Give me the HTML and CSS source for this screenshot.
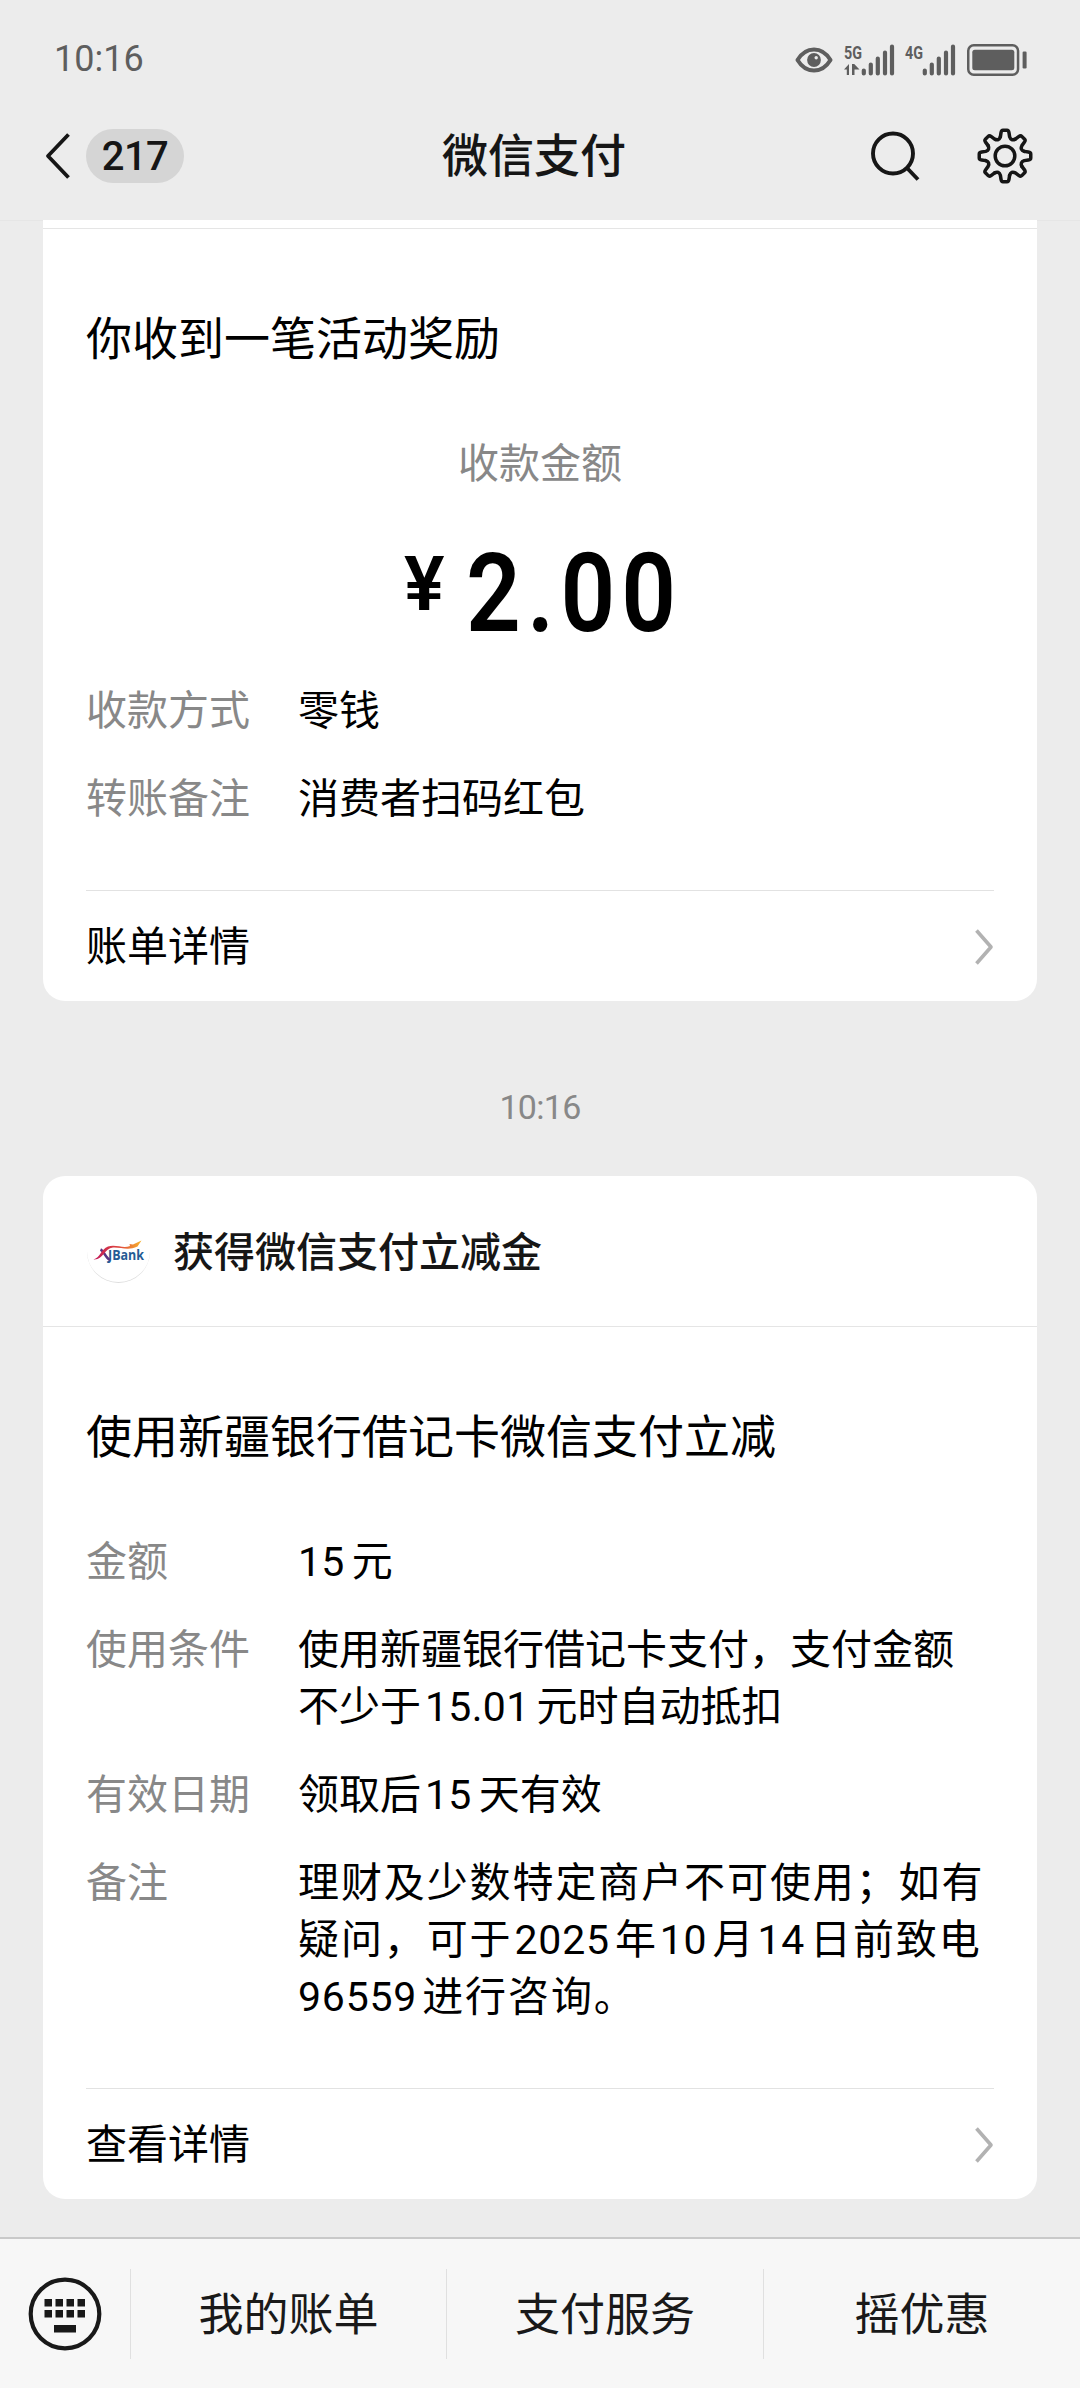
FILE: index.html
```html
<!DOCTYPE html>
<html lang="zh-CN">
<head>
<meta charset="utf-8">
<title>微信支付</title>
<link rel="stylesheet" href="styles.css">
</head>
<body>
<div class="screen">
  <header class="top">
    <div class="status">
      <span class="clock">10:16</span>
      <div class="status-icons">
        <svg class="eye" width="38" height="26" viewBox="0 0 38 26"><path d="M2.500 13C7 5.500 13 2.500 19 2.500S31 5.500 35.500 13C31 20.500 25 23.500 19 23.500S7 20.500 2.500 13Z" fill="none" stroke="#5e5e5e" stroke-width="4" stroke-linejoin="round"/><circle cx="19" cy="13" r="6.900" fill="#5e5e5e"/><circle cx="21.200" cy="10.800" r="1.700" fill="#ececec"/></svg>
        <svg class="signal" width="51" height="32" viewBox="0 0 51 32"><text class="net" x="0" y="14.500" textLength="18" lengthAdjust="spacingAndGlyphs">5G</text><path d="M0 25.500L5 20V31H2.800V25.500ZM8 20H10.200L15.500 25.500H10.500V31H8Z" fill="#5e5e5e"/><path d="M19.800 26.500V29.500M26.800 20.500V29.500M33.800 14.500V29.500M41 8.500V29.500M48 2.500V29.500" stroke="#5e5e5e" stroke-width="4.200" stroke-linecap="round"/></svg>
        <svg class="signal" width="51" height="32" viewBox="0 0 51 32"><text class="net" x="0" y="14.500" textLength="18" lengthAdjust="spacingAndGlyphs">4G</text><path d="M19.800 26.500V29.500M26.800 20.500V29.500M33.800 14.500V29.500M41 8.500V29.500M48 2.500V29.500" stroke="#5e5e5e" stroke-width="4.200" stroke-linecap="round"/></svg>
        <svg class="battery" width="60" height="32" viewBox="0 0 60 32"><rect x="1.250" y="1.250" width="49.800" height="29.500" rx="5.500" fill="none" stroke="#5e5e5e" stroke-width="2.500"/><rect x="5.300" y="5.700" width="42" height="20.500" rx="2.500" fill="#5e5e5e"/><rect x="55.600" y="7.500" width="4" height="17" rx="1.200" fill="#5e5e5e"/></svg>
      </div>
    </div>
    <nav class="nav">
      <div class="nav-left">
        <svg width="26" height="48" viewBox="0 0 26 48"><path d="M23.500 2.500L3 24L23.500 45.500" fill="none" stroke="#161616" stroke-width="3.800" stroke-linejoin="round"/></svg>
        <span class="unread">217</span>
      </div>
      <h1 class="nav-title">微信支付</h1>
      <div class="nav-right">
        <svg width="52" height="52" viewBox="0 0 52 52"><circle cx="24" cy="23.500" r="20" fill="none" stroke="#161616" stroke-width="3.900"/><path d="M38 38L49 49.500" stroke="#161616" stroke-width="3.900"/></svg>
        <svg width="58" height="58" viewBox="-29 -29 58 58" fill="none" stroke="#161616" stroke-width="3.500" stroke-linejoin="round" stroke-linecap="round">
          <defs><path id="tooth" d="M-4.620 -19.250L-4 -23.300Q-3.600 -25.750 -2 -25.750H2Q3.600 -25.750 4 -23.300L4.620 -19.250Q6.120 -14.780 10.350 -16.880"/></defs>
          <use href="#tooth"/><use href="#tooth" transform="rotate(45)"/><use href="#tooth" transform="rotate(90)"/><use href="#tooth" transform="rotate(135)"/><use href="#tooth" transform="rotate(180)"/><use href="#tooth" transform="rotate(225)"/><use href="#tooth" transform="rotate(270)"/><use href="#tooth" transform="rotate(315)"/>
          <circle r="9.800"/>
        </svg>
      </div>
    </nav>
  </header>

  <main class="chat">
    <section class="card card-clipped">
      <div class="card-stub"></div>
      <div class="card-body">
        <h2 class="headline">你收到一笔活动奖励</h2>
        <p class="amount-label">收款金额</p>
        <p class="amount"><span class="yen">¥</span><span class="figure">2.00</span></p>
        <dl class="rows">
          <dt>收款方式</dt><dd>零钱</dd>
          <dt>转账备注</dt><dd>消费者扫码红包</dd>
        </dl>
      </div>
      <a class="card-link">账单详情
        <svg width="20" height="38" viewBox="0 0 20 38"><path d="M2.500 2.500L17 19L2.500 35.500" fill="none" stroke="#b2b2b2" stroke-width="3.600" stroke-linejoin="round"/></svg>
      </a>
    </section>

    <time class="stamp">10:16</time>

    <section class="card">
      <div class="card-head">
        <span class="avatar">
          <svg width="52" height="30" viewBox="0 0 52 30"><defs><linearGradient id="swoosh"><stop offset="0" stop-color="#c2185b"/><stop offset=".55" stop-color="#e0483c"/><stop offset="1" stop-color="#f7b52c"/></linearGradient></defs><text class="logo-name" x="15" y="24" textLength="36" lengthAdjust="spacingAndGlyphs">JBank</text><path d="M7.500 13.500C11 15 12.500 22 17 24" fill="none" stroke="#5a3583" stroke-width="2.600"/><path d="M.5 23.500C7 22 8 13 15 10.500C23 8 30 13 37 10L36.500 8L40 8.500L48.500 4.500L44.500 10.500C35 15 28 11 20 11.500C11 12.500 10 24.500 .5 23.500Z" fill="url(#swoosh)"/></svg>
        </span>
        <h2 class="card-title">获得微信支付立减金</h2>
      </div>
      <div class="card-body">
        <h2 class="headline">使用新疆银行借记卡微信支付立减</h2>
        <dl class="rows rows-coupon">
          <dt>金额</dt><dd><span class="num">15</span>元</dd>
          <dt>使用条件</dt><dd>使用新疆银行借记卡支付，支付金额<br>不少于<span class="num mid">15.01</span>元时自动抵扣</dd>
          <dt>有效日期</dt><dd>领取后<span class="num mid">15</span>天有效</dd>
          <dt>备注</dt><dd><span class="spread">理财及少数特定商户不可使用；如有</span><span class="spread">疑问，可于<span class="num mid">2025</span>年<span class="num mid">10</span>月<span class="num mid">14</span>日前致电</span><span class="spread"><span class="num">96559</span>进行咨询。</span></dd>
        </dl>
      </div>
      <a class="card-link">查看详情
        <svg width="20" height="38" viewBox="0 0 20 38"><path d="M2.500 2.500L17 19L2.500 35.500" fill="none" stroke="#b2b2b2" stroke-width="3.600" stroke-linejoin="round"/></svg>
      </a>
    </section>
  </main>

  <footer class="menu">
    <span class="keyboard">
      <svg width="74" height="74" viewBox="0 0 74 74"><circle cx="37" cy="37" r="34.300" fill="none" stroke="#191919" stroke-width="4.200"/><path d="M16.500 22h7.500v7.500h-7.500zM27.500 22h7.500v7.500h-7.500zM38.500 22h7.500v7.500h-7.500zM49.500 22h7.500v7.500h-7.500zM16.500 33h7.500v7.500h-7.500zM27.500 33h7.500v7.500h-7.500zM38.500 33h7.500v7.500h-7.500zM49.500 33h7.500v7.500h-7.500zM26 48h22v7.500h-22z" fill="#191919"/></svg>
    </span>
    <a class="menu-item">我的账单</a>
    <a class="menu-item">支付服务</a>
    <a class="menu-item">摇优惠</a>
  </footer>
</div>
</body>
</html>
```
FILE: styles.css
```css
* { box-sizing: border-box; margin: 0; padding: 0; }

body {
  background: #ececec;
  font-family: Roboto, "Noto Sans CJK SC", sans-serif;
  color: #000;
}

svg { display: block; flex: none; overflow: visible; }

.screen {
  width: 1080px;
  height: 2388px;
  display: flex;
  flex-direction: column;
  overflow: hidden;
}

/* status bar and navigation */
.top { height: 220px; flex: none; }

.status {
  height: 91px;
  padding: 27px 53px 0 54px;
  display: flex;
  justify-content: space-between;
}
.clock { font-size: 36px; line-height: 65px; color: #5e5e5e; }
.status-icons { height: 65px; display: flex; align-items: center; }
.eye { margin-right: 11px; }
.signal { margin-right: 10.500px; }
.battery { margin-left: .5px; }
.net { font: 700 19px Roboto, sans-serif; fill: #5e5e5e; }

.nav {
  height: 129px;
  padding: 0 46px 0 45px;
  display: grid;
  grid-template-columns: 1fr auto 1fr;
  align-items: center;
}
.nav-left { display: flex; align-items: center; gap: 15px; }
.unread {
  width: 98px;
  height: 54px;
  border-radius: 27px;
  background: #d5d5d5;
  font-size: 40px;
  font-weight: 500;
  letter-spacing: -.5px;
  line-height: 55px;
  text-align: center;
  color: #161616;
}
.nav-title {
  margin-right: 11px;
  font-size: 46px;
  font-weight: 500;
  line-height: 60px;
  color: #161616;
}
.nav-right { display: flex; align-items: center; justify-content: flex-end; gap: 55px; }

/* conversation */
.chat {
  flex: 1;
  padding: 0 43px;
  border-top: 1px solid #e6e6e6;
}
.card { background: #fff; border-radius: 22px; }
.card-clipped { margin-top: -1px; border-radius: 0 0 22px 22px; }
.card-stub { height: 9px; border-bottom: 1px solid #e5e5e5; }
.card-body { padding: 80px 43px 62px; }
.headline { font-size: 46px; font-weight: 400; line-height: 60px; }
.amount-label {
  margin-top: 67px;
  font-size: 41px;
  line-height: 57px;
  text-align: center;
  color: #888;
}
.amount {
  height: 100px;
  margin: 51px 0 39px;
  padding-left: 318px;
  display: flex;
  font-weight: 600;
}
.yen { font-size: 76px; line-height: 80px; margin-right: 21px; }
.figure {
  font-size: 109px;
  line-height: 101px;
  letter-spacing: 7px;
  transform: scaleX(.88);
  transform-origin: left;
}

.rows {
  display: grid;
  grid-template-columns: 212px 1fr;
  row-gap: 31px;
  font-size: 41px;
  line-height: 57px;
}
.rows-coupon { margin-top: 67px; }
.rows dt { color: #888; }
.rows dd { white-space: nowrap; }
.num { margin-right: 7px; letter-spacing: .3px; }
.mid { margin-left: 4px; }
.spread { display: block; letter-spacing: 1.900px; }
.spread .num { letter-spacing: .8px; margin-right: 5px; }
.spread .mid { margin-left: 2px; }

.card-link {
  height: 111px;
  margin: 0 43px;
  border-top: 1px solid #e2e2e2;
  display: flex;
  align-items: center;
  justify-content: space-between;
  padding-top: 3px;
  font-size: 41px;
  line-height: 57px;
}
.card-link svg { margin-bottom: 2px; }
.stamp {
  display: block;
  height: 175px;
  padding-top: 76px;
  font-size: 34px;
  letter-spacing: -.7px;
  line-height: 60px;
  text-align: center;
  color: #888;
}

.card-head {
  height: 151px;
  padding-left: 44px;
  border-bottom: 1px solid #e5e5e5;
  display: flex;
  align-items: center;
  gap: 23px;
}
.avatar {
  width: 63px;
  height: 63px;
  border-radius: 50%;
  border-bottom: 1px solid #ddd;
  display: flex;
  align-items: center;
  justify-content: center;
}
.logo-name { font: 700 14px "Open Sans", sans-serif; fill: #245b94; }
.card-title { padding-top: 4px; font-size: 41px; font-weight: 500; line-height: 57px; color: #161616; }

/* bottom menu */
.menu {
  height: 151px;
  flex: none;
  border-top: 2px solid #c9c9c9;
  background: #f7f7f7;
  display: grid;
  grid-template-columns: 130px 316px 317px 317px;
  align-items: center;
}
.keyboard { padding-left: 28px; }
.menu-item {
  height: 90px;
  border-left: 1px solid #e0e0e0;
  font-size: 45px;
  line-height: 93px;
  text-align: center;
  color: #191919;
}
```
